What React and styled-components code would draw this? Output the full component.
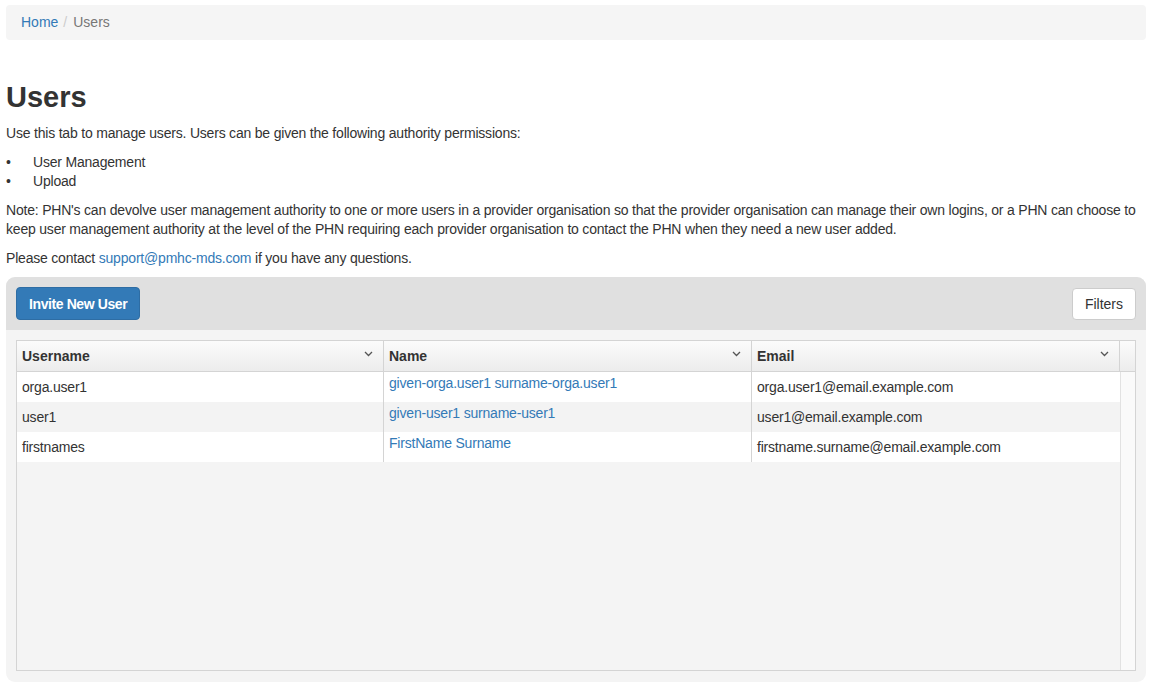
import React from 'react';
import styled, { createGlobalStyle } from 'styled-components';

const GlobalStyle = createGlobalStyle`
  body {
    margin: 0;
    background: #fff;
    font-family: 'Liberation Sans', Arial, sans-serif;
    font-size: 14px;
    line-height: 19px;
    letter-spacing: -0.2px;
    color: #333;
  }
  a {
    color: #337ab7;
    text-decoration: none;
  }
`;

const Page = styled.div`
  padding: 5px 6px 7px;
`;

const Breadcrumb = styled.ol`
  display: flex;
  margin: 0;
  padding: 8px 15px;
  list-style: none;
  background: #f5f5f5;
  border-radius: 4px;
  letter-spacing: 0;
`;

const Crumb = styled.li`
  color: ${(p) => (p.active ? '#777' : '#337ab7')};
  &:not(:first-child)::before {
    content: '/';
    padding: 0 6px 0 5px;
    color: #ccc;
  }
`;

const Title = styled.h1`
  margin: 41px 0 10px;
  font-size: 29px;
  line-height: 33px;
  font-weight: 700;
  letter-spacing: 0;
  color: #333;
`;

const Para = styled.p`
  margin: 0 0 ${(p) => (p.tight ? 9 : 10)}px;
`;

const List = styled.ul`
  margin: 0 0 10px;
  padding: 0;
  list-style: none;
`;

const Item = styled.li`
  display: flex;
`;

const Bullet = styled.span`
  width: 27px;
  flex: none;
`;

const Panel = styled.section`
  background: #f4f4f4;
  border-radius: 9px;
  overflow: hidden;
`;

const Toolbar = styled.div`
  display: flex;
  justify-content: space-between;
  align-items: center;
  padding: 10px 10px;
  background: #e0e0e0;
`;

const Button = styled.button`
  height: ${(p) => (p.primary ? 33 : 32)}px;
  padding: 0 12px;
  font-family: 'Liberation Sans', Arial, sans-serif;
  font-size: 14px;
  font-weight: ${(p) => (p.primary ? 700 : 400)};
  letter-spacing: ${(p) => (p.primary ? '-0.4px' : '0')};
  color: ${(p) => (p.primary ? '#fff' : '#333')};
  background: ${(p) => (p.primary ? '#337ab7' : '#fff')};
  border: 1px solid ${(p) => (p.primary ? '#2e6da4' : '#ccc')};
  border-radius: 4px;
`;

const PanelBody = styled.div`
  padding: 10px 10px 11px;
`;

const Grid = styled.div`
  display: flex;
  flex-direction: column;
  height: 331px;
  box-sizing: border-box;
  border: 1px solid #d4d4d4;
`;

const HeaderRow = styled.div`
  display: grid;
  grid-template-columns: 367px 368px 368px 1fr;
  height: 30px;
  background: linear-gradient(#fbfbfb, #ececec);
  border-bottom: 1px solid #d4d4d4;
`;

const HeaderCell = styled.div`
  display: flex;
  align-items: center;
  justify-content: space-between;
  padding: 0 10px 0 5px;
  font-weight: 700;
  letter-spacing: 0;
  color: #333;
  border-right: 1px solid #d4d4d4;
  &:last-child {
    border-right: none;
  }
`;

const Chevron = styled.svg`
  width: 9px;
  height: 6px;
  margin-top: -4px;
`;

const Body = styled.div`
  display: flex;
  flex: 1;
`;

const Rows = styled.div`
  width: 1103px;
`;

const Row = styled.div`
  display: grid;
  grid-template-columns: 367px 368px 368px;
  height: 30px;
  background: ${(p) => (p.odd ? '#f3f3f3' : '#fff')};
`;

const Cell = styled.div`
  padding: ${(p) => (p.top ? '2px 5px 0' : '6px 5px 0')};
  border-right: 1px solid ${(p) => (p.last ? 'transparent' : '#d4d4d4')};
  white-space: nowrap;
`;

const Track = styled.div`
  flex: 1;
  background: #fafafa;
  border-left: 1px solid #e2e2e2;
`;

const users = [
  { username: 'orga.user1', name: 'given-orga.user1 surname-orga.user1', email: 'orga.user1@email.example.com' },
  { username: 'user1', name: 'given-user1 surname-user1', email: 'user1@email.example.com' },
  { username: 'firstnames', name: 'FirstName Surname', email: 'firstname.surname@email.example.com' },
];

const Sort = () => (
  <Chevron viewBox="0 0 9 6">
    <polyline points="1,1 4.5,4.5 8,1" fill="none" stroke="#555" strokeWidth="1.3" />
  </Chevron>
);

const App = () => (
  <Page>
    <GlobalStyle />
    <Breadcrumb>
      <Crumb><a href="#home">Home</a></Crumb>
      <Crumb active>Users</Crumb>
    </Breadcrumb>
    <Title>Users</Title>
    <Para>Use this tab to manage users. Users can be given the following authority permissions:</Para>
    <List>
      <Item><Bullet>•</Bullet>User Management</Item>
      <Item><Bullet>•</Bullet>Upload</Item>
    </List>
    <Para>
      Note: PHN&apos;s can devolve user management authority to one or more users in a provider organisation so that the provider organisation can manage their own logins, or a PHN can choose to keep user management authority at the level of the PHN requiring each provider organisation to contact the PHN when they need a new user added.
    </Para>
    <Para tight>
      Please contact <a href="#mail">support@pmhc-mds.com</a> if you have any questions.
    </Para>
    <Panel>
      <Toolbar>
        <Button primary>Invite New User</Button>
        <Button>Filters</Button>
      </Toolbar>
      <PanelBody>
        <Grid>
          <HeaderRow>
            <HeaderCell>Username <Sort /></HeaderCell>
            <HeaderCell>Name <Sort /></HeaderCell>
            <HeaderCell>Email <Sort /></HeaderCell>
            <HeaderCell />
          </HeaderRow>
          <Body>
            <Rows>
              {users.map((u, i) => (
                <Row key={u.username} odd={i % 2 === 1}>
                  <Cell>{u.username}</Cell>
                  <Cell top><a href="#user">{u.name}</a></Cell>
                  <Cell last>{u.email}</Cell>
                </Row>
              ))}
            </Rows>
            <Track />
          </Body>
        </Grid>
      </PanelBody>
    </Panel>
  </Page>
);

export default App;
